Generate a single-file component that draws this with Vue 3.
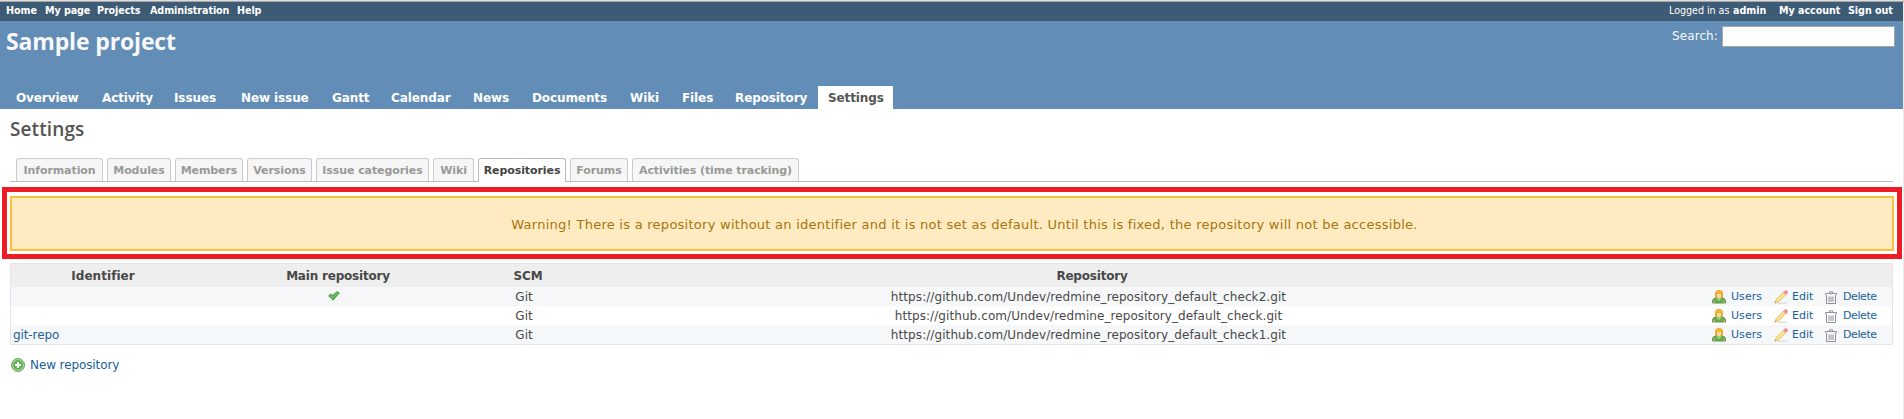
<script setup>
const topLinks = ['Home', 'My page', 'Projects', 'Administration', 'Help']
const mainMenu = ['Overview', 'Activity', 'Issues', 'New issue', 'Gantt', 'Calendar', 'News', 'Documents', 'Wiki', 'Files', 'Repository', 'Settings']
const tabs = ['Information', 'Modules', 'Members', 'Versions', 'Issue categories', 'Wiki', 'Repositories', 'Forums', 'Activities (time tracking)']
const repositories = [
  { id: '', main: true, scm: 'Git', url: 'https://github.com/Undev/redmine_repository_default_check2.git' },
  { id: '', main: false, scm: 'Git', url: 'https://github.com/Undev/redmine_repository_default_check.git' },
  { id: 'git-repo', main: false, scm: 'Git', url: 'https://github.com/Undev/redmine_repository_default_check1.git' },
]
</script>

<template>
  <div class="page">
    <div class="strip"></div>
    <div class="body">
      <nav class="top-menu">
        <div class="links"><a v-for="l in topLinks" :key="l">{{ l }}</a></div>
        <div class="account"><span>Logged in as</span><a>admin</a><a>My account</a><a>Sign out</a></div>
      </nav>
      <header class="header">
        <div class="title-row">
          <h1>Sample project</h1>
          <div class="search"><label>Search:</label><input type="text" /></div>
        </div>
        <nav class="main-menu">
          <a v-for="m in mainMenu" :key="m" :class="{ selected: m === 'Settings' }">{{ m }}</a>
        </nav>
      </header>
      <main>
        <h2>Settings</h2>
        <div class="tabs">
          <a v-for="t in tabs" :key="t" :class="{ selected: t === 'Repositories' }"><span>{{ t }}</span></a>
        </div>
        <div class="highlight">
          <div class="warning"><span>Warning! There is a repository without an identifier and it is not set as default. Until this is fixed, the repository will not be accessible.</span></div>
        </div>
        <div class="table">
          <div class="row head"><b class="wide">Identifier</b><b>Main repository</b><b class="scm">SCM</b><b>Repository</b><b></b></div>
          <div v-for="r in repositories" :key="r.url" class="row">
            <div class="ident"><a>{{ r.id }}</a></div>
            <div>
              <svg v-if="r.main" class="check" viewBox="0 0 12 10" width="12" height="10">
                <path d="M.7 4.8 2.8 3l1.7 1.6L9.2.6l2 1.5L5 9.2z" fill="#5cb552" stroke="#3b8f3b" stroke-width=".9" />
                <path d="M2 4.7l2.5 2L9.5 2" fill="none" stroke="#83cd74" stroke-width="1" />
              </svg>
            </div>
            <div>{{ r.scm }}</div>
            <div class="url">{{ r.url }}</div>
            <div class="actions">
              <svg viewBox="0 0 14 14" width="14" height="14">
                <path d="M.5 13v-2.2Q.8 8.5 3.5 8h7q2.7.5 3 2.8V13z" fill="#65b14d" stroke="#4c8f4a" stroke-width=".9" />
                <path d="M4 8.2 7 11l3-2.8z" fill="#a5d982" />
                <path d="M1 10.8h1.6v2.2H1zM11.4 10.8H13v2.2h-1.6z" fill="#d9a566" />
                <path d="M3.5 7.5V2.2Q4 .4 7 .4t3.5 1.8v5.3z" fill="#f5ac1c" stroke="#e0962a" stroke-width=".7" />
                <path d="M5 4h4v3L7 8.4 5 7z" fill="#fbdcae" />
                <path d="M4.2 2.3h5.6" stroke="#ffc030" />
              </svg>
              <a class="users">Users</a>
              <svg viewBox="0 0 14 14" width="14" height="14">
                <path d="M4 13.3h9" stroke="#dcdcdc" stroke-width="1.2" />
                <path d="M.9 13.1 2.2 9.6 9.4 2.2 11.8 4.6 4.4 12z" fill="#fbe07c" stroke="#d9ac55" stroke-width=".7" />
                <path d="M3 10.4l7-7" stroke="#fff1ac" stroke-width="1" />
                <path d="M.5 13.5 1.1 12l.8.8z" fill="#777" />
                <path d="M9.5 2.2 11.1.6h1.4l1 1v1.4l-1.6 1.7z" fill="#f78f8f" stroke="#e88080" stroke-width=".5" />
                <path d="M8.9 2.7l2.4 2.4" stroke="#ddd" stroke-width=".9" />
              </svg>
              <a>Edit</a>
              <svg viewBox="0 0 12 13" width="12" height="13" fill="none" stroke="#8b8997">
                <path d="M4.5 2V.8h3V2M.5 4V2.5h11V4M1.5 4v8.5h9V4M4 5.5V11M6 5.5V11M8 5.5V11" stroke-width=".95" />
              </svg>
              <a class="delete">Delete</a>
            </div>
          </div>
        </div>
        <div class="new-repo">
          <svg viewBox="0 0 14 14" width="14" height="14">
            <circle cx="7" cy="7" r="6.4" fill="#b5dea9" stroke="#569a50" />
            <circle cx="7" cy="7" r="5" fill="#61b452" />
            <path d="M7 4v6M4 7h6" stroke="#fff" stroke-width="2" />
          </svg>
          <a>New repository</a>
        </div>
      </main>
    </div>
  </div>
</template>

<style>
body { margin: 0; background: #fff; }
</style>

<style scoped>
* { box-sizing: border-box; }
.page { width: 1904px; height: 419px; overflow: hidden; font: 12px/14px Verdana, "DejaVu Sans", sans-serif; color: #484848; white-space: nowrap; }
.strip { height: 2px; background: #dcdcdc; border-bottom: 1px solid #a9a9a9; }
.body { height: 417px; border-right: 1px solid #ececec; background: #fff; }
.top-menu { height: 19px; background: #3e5b76; color: #fff; display: flex; justify-content: space-between; font-size: 9.6px; line-height: 17px; }
.top-menu a { font-weight: bold; }
.links { display: grid; grid-template-columns: 39px 52px 53px 87px 30px; padding-left: 6px; letter-spacing: -0.08px; }
.account { display: grid; grid-template-columns: 64px 46px 69px 55px; letter-spacing: -0.05px; }
.header { height: 88px; background: #628db6; color: #f8f8f8; display: flex; flex-direction: column; justify-content: space-between; }
.title-row { display: flex; justify-content: space-between; padding: 5px 8px 0 6px; }
h1, h2 { margin: 0; font-family: "Trebuchet MS", "Open Sans", sans-serif; font-weight: 600; }
h1 { font-size: 23px; line-height: 30px; font-weight: 700; letter-spacing: -0.15px; }
.search { display: flex; }
.search label { width: 50px; line-height: 20px; letter-spacing: 0.1px; }
.search input { width: 173px; height: 21px; margin: 0; border: 1px solid #a5a5a5; background: #fff; }
.main-menu { height: 23px; padding-left: 6px; display: grid; grid-template-columns: 86px 72px 67px 91px 59px 82px 59px 98px 52px 53px 93px 75px; font-weight: bold; line-height: 24px; letter-spacing: -0.1px; color: #fff; }
.main-menu a { height: 23px; padding-left: 10px; }
.main-menu .selected { background: #fff; color: #555; }
main { padding: 0 10px; }
h2 { font-size: 19px; line-height: 30px; padding-top: 5px; color: #555; height: 49px; letter-spacing: 0.1px; }
.tabs { height: 24px; padding-left: 6px; border-bottom: 1px solid #bbb; display: grid; grid-template-columns: 87px 64px 68px 65px 113px 41px 88px 58px 167px; gap: 4px; }
.tabs a { height: 23px; border: 1px solid #ccc; border-bottom: 0; border-radius: 3px 3px 0 0; background: #f6f6f6; color: #999; font-size: 11px; font-weight: bold; line-height: 23px; display: flex; justify-content: center; letter-spacing: -0.08px; }
.tabs .selected { height: 24px; background: #fff; border-color: #bbb; color: #444; }
.highlight { margin: 5px -9px 4px -8px; height: 72px; border: 5px solid #ed1c24; padding: 4px 3px; }
.warning { height: 55px; padding-left: 25px; border: 2px solid #fdbf3b; background: #ffebc1; color: #a6750c; font-size: 13px; line-height: 53px; text-align: center; letter-spacing: 0.26px; }
.table { width: 1883px; height: 82px; border: 1px solid #e4e4e4; }
.row { display: grid; grid-template-columns: 184px 286px 94px 1034px 283px; height: 19px; line-height: 20px; text-align: center; }
.row > div { height: 19px; padding-right: 8px; }
.row:nth-child(even) { background: #f6f7f8; }
.row.head { height: 23px; line-height: 25px; background: #eee; letter-spacing: -0.2px; }
.row.head .wide { letter-spacing: 0.05px; }
.row .ident { text-align: left; padding-left: 2px; letter-spacing: -0.1px; }
.row .url { letter-spacing: 0.08px; padding-right: 7px; }
.check { display: block; margin: 4px auto 0; }
.ident a, .actions a, .new-repo a { color: #20609b; }
.row .actions { padding: 0 14px 0 103px; display: grid; grid-template-columns: 19px 43px 18px 33px 18px 35px; align-items: center; text-align: left; font-size: 11px; }
.actions .users { letter-spacing: 0.05px; }
.actions .delete { letter-spacing: -0.4px; }
.new-repo { display: grid; grid-template-columns: 19px auto; padding: 13px 0 0 1px; align-items: center; letter-spacing: -0.1px; }
</style>
